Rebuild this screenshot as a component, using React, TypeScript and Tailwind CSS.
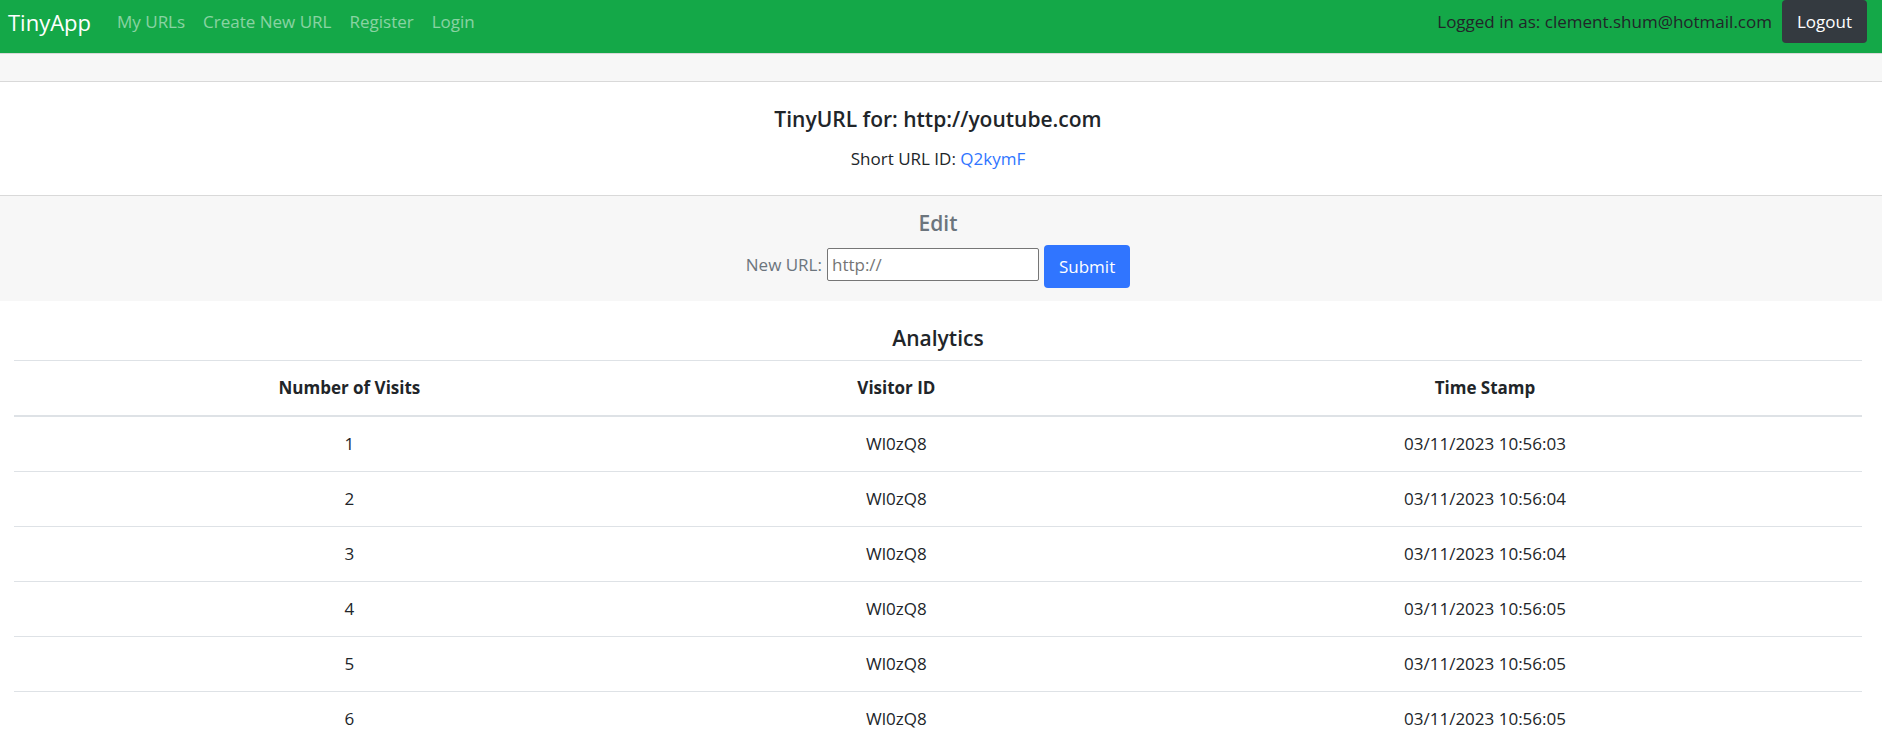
const navLinks = ["My URLs", "Create New URL", "Register", "Login"];

const visits = [
  { visitor: "Wl0zQ8", time: "03/11/2023 10:56:03" },
  { visitor: "Wl0zQ8", time: "03/11/2023 10:56:04" },
  { visitor: "Wl0zQ8", time: "03/11/2023 10:56:04" },
  { visitor: "Wl0zQ8", time: "03/11/2023 10:56:05" },
  { visitor: "Wl0zQ8", time: "03/11/2023 10:56:05" },
  { visitor: "Wl0zQ8", time: "03/11/2023 10:56:05" },
];

function Header() {
  return (
    <header className="flex items-start justify-between bg-[#14a848] pb-[10px] pl-2 pr-[15px]">
      <nav className="flex h-[43px] items-center">
        <a href="#" className="mr-[17px] text-[22px] leading-[30px] text-white">
          TinyApp
        </a>
        <ul className="flex">
          {navLinks.map((label) => (
            <li key={label}>
              <a href="#" className="px-[9px] text-white/50">
                {label}
              </a>
            </li>
          ))}
        </ul>
      </nav>
      <form className="flex items-center gap-[10px]" onSubmit={(e) => e.preventDefault()}>
        <span>Logged in as: clement.shum@hotmail.com</span>
        <button type="submit" className="h-[43px] rounded bg-[#343a40] px-[15px] text-white">
          Logout
        </button>
      </form>
    </header>
  );
}

function EditForm() {
  return (
    <section className="bg-[#f7f7f7] pb-[13px] pr-[6px] pt-3 text-center text-[#6c757d]">
      <h2 className="mb-[7px] text-[21px] font-semibold leading-[30px]">Edit</h2>
      <form className="flex items-start justify-center gap-[5px]" onSubmit={(e) => e.preventDefault()}>
        <label htmlFor="new-url" className="pt-[7px]">
          New URL:
        </label>
        <input
          id="new-url"
          type="text"
          placeholder="http://"
          className="mt-[3px] h-[33px] w-[212px] rounded-xs border border-[#767676] bg-white px-1 placeholder:text-[#757575]"
        />
        <button type="submit" className="h-[43px] rounded bg-[#3075ff] px-[15px] text-white">
          Submit
        </button>
      </form>
    </section>
  );
}

function Analytics() {
  return (
    <section className="pl-[14px] pr-5 pt-[22px] text-center">
      <h2 className="mb-[7px] text-[21px] font-semibold leading-[30px]">Analytics</h2>
      <table className="w-full table-fixed border-separate border-spacing-0">
        <thead>
          <tr>
            <th className="w-[36.3%] border-b-2 border-t border-[#dee2e6] p-[14px] font-bold">Number of Visits</th>
            <th className="w-[22.9%] border-b-2 border-t border-[#dee2e6] p-[14px] font-bold">Visitor ID</th>
            <th className="border-b-2 border-t border-[#dee2e6] p-[14px] font-bold">Time Stamp</th>
          </tr>
        </thead>
        <tbody>
          {visits.map((visit, i) => (
            <tr key={i}>
              <td className="border-b border-[#dee2e6] p-[14px]">{i + 1}</td>
              <td className="border-b border-[#dee2e6] p-[14px]">{visit.visitor}</td>
              <td className="border-b border-[#dee2e6] p-[14px]">{visit.time}</td>
            </tr>
          ))}
        </tbody>
      </table>
    </section>
  );
}

export default function App() {
  return (
    <div className="h-screen overflow-hidden bg-white font-['Open_Sans',sans-serif] text-[17px] leading-[26px] text-[#212529]">
      <Header />
      <div className="h-[29px] border-y border-[#d9d9d9] bg-[#f7f7f7]" />
      <section className="border-b border-[#d9d9d9] pb-[23px] pr-[6px] pt-[22px] text-center">
        <h1 className="mb-3 text-[21px] font-semibold leading-[30px]">TinyURL for: http://youtube.com</h1>
        <p>
          Short URL ID:{" "}
          <a href="#" className="text-[#3075ff]">
            Q2kymF
          </a>
        </p>
      </section>
      <EditForm />
      <Analytics />
    </div>
  );
}
